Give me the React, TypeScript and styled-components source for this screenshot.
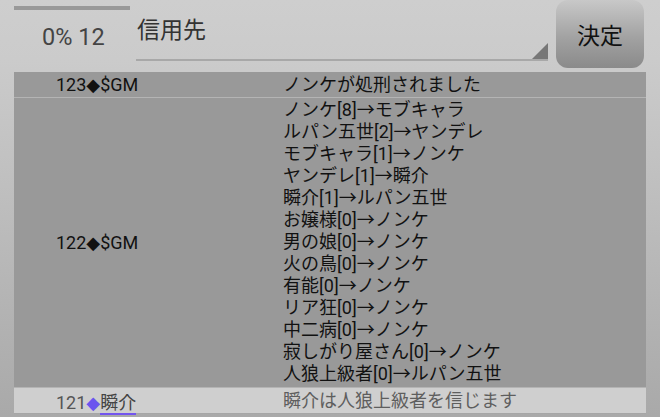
import React from "react";
import styled, { createGlobalStyle } from "styled-components";

const Global = createGlobalStyle`
  html, body { margin: 0; padding: 0; }
  body {
    width: 660px;
    height: 417px;
    overflow: hidden;
    background: linear-gradient(#cecece 0px, #cbcbcb 60px, #a9a9a9 417px);
    font-family: Roboto, "Noto Sans CJK JP", sans-serif;
  }
`;

const Page = styled.div`
  width: 660px;
  height: 417px;
  display: flex;
  flex-direction: column;
`;

const TopBar = styled.div`
  height: 72px;
  display: flex;
  align-items: flex-start;
  padding-left: 14px;
`;

const Status = styled.div`
  width: 116px;
  display: flex;
  flex-direction: column;
`;

const Progress = styled.div`
  margin-top: 6px;
  height: 4px;
  background: #999;
`;

const Counter = styled.div`
  margin-top: 13px;
  padding-left: 28px;
  font-size: 23.5px;
  color: #444;
  line-height: 28px;
  white-space: nowrap;
`;

const Field = styled.div`
  position: relative;
  margin-left: 6px;
  width: 412px;
  height: 61px;
  border-bottom: 2px solid #a8a8a8;
  box-sizing: border-box;
  display: flex;
  align-items: flex-start;
`;

const FieldText = styled.div`
  margin-top: 16px;
  padding-left: 1px;
  font-size: 23px;
  line-height: 30px;
  color: #333;
`;

const Corner = styled.div`
  position: absolute;
  right: 0;
  bottom: 0;
  width: 0;
  height: 0;
  border-left: 16px solid transparent;
  border-bottom: 16px solid #777;
`;

const Button = styled.div`
  margin-left: 8px;
  width: 88px;
  height: 68px;
  border-radius: 12px;
  background: linear-gradient(#c8c8c8, #a2a2a2 55%, #8a8a8a);
  display: flex;
  align-items: center;
  justify-content: center;
  font-size: 23px;
  color: #111;
`;

const Table = styled.div`
  margin: 0 14px;
  display: flex;
  flex-direction: column;
`;

const Row = styled.div<{ $light?: boolean }>`
  display: grid;
  grid-template-columns: 269px 1fr;
  align-items: center;
  background: ${(p) => (p.$light ? "#cfcfcf" : "#999999")};
  color: ${(p) => (p.$light ? "#555" : "#111")};
  border-bottom: 1px solid ${(p) => (p.$light ? "#a6a6a6" : "#b4b4b4")};
`;

const Who = styled.div`
  padding-left: 42px;
  font-size: 18px;
  white-space: nowrap;
`;

const Msg = styled.div<{ $dim?: boolean }>`
  font-size: 18px;
  line-height: 22px;
  white-space: nowrap;
  color: ${(p) => (p.$dim ? "#5e5e5e" : "inherit")};
`;

const Lines = styled.div`
  padding: 1px 0 2px;
  font-size: 18px;
  line-height: 22px;
  white-space: nowrap;
`;

const Diamond = styled.span<{ $purple?: boolean }>`
  font-family: "DejaVu Sans", sans-serif;
  font-size: 18px;
  color: ${(p) => (p.$purple ? "#6a55ee" : "#111")};
`;

const Name = styled.span`
  color: #444;
  border-bottom: 2px solid #7355ee;
`;

const votes = [
  "ノンケ[8]→モブキャラ",
  "ルパン五世[2]→ヤンデレ",
  "モブキャラ[1]→ノンケ",
  "ヤンデレ[1]→瞬介",
  "瞬介[1]→ルパン五世",
  "お嬢様[0]→ノンケ",
  "男の娘[0]→ノンケ",
  "火の鳥[0]→ノンケ",
  "有能[0]→ノンケ",
  "リア狂[0]→ノンケ",
  "中二病[0]→ノンケ",
  "寂しがり屋さん[0]→ノンケ",
  "人狼上級者[0]→ルパン五世",
];

export default function App() {
  return (
    <Page>
      <Global />
      <TopBar>
        <Status>
          <Progress />
          <Counter>0% 12</Counter>
        </Status>
        <Field>
          <FieldText>信用先</FieldText>
          <Corner />
        </Field>
        <Button>決定</Button>
      </TopBar>
      <Table>
        <Row style={{ height: 25 }}>
          <Who>
            123<Diamond>◆</Diamond>$GM
          </Who>
          <Msg>ノンケが処刑されました</Msg>
        </Row>
        <Row>
          <Who>
            122<Diamond>◆</Diamond>$GM
          </Who>
          <Lines>
            {votes.map((v) => (
              <div key={v}>{v}</div>
            ))}
          </Lines>
        </Row>
        <Row $light style={{ height: 25 }}>
          <Who>
            121<Diamond $purple>◆</Diamond>
            <Name>瞬介</Name>
          </Who>
          <Msg $dim>瞬介は人狼上級者を信じます</Msg>
        </Row>
      </Table>
    </Page>
  );
}
